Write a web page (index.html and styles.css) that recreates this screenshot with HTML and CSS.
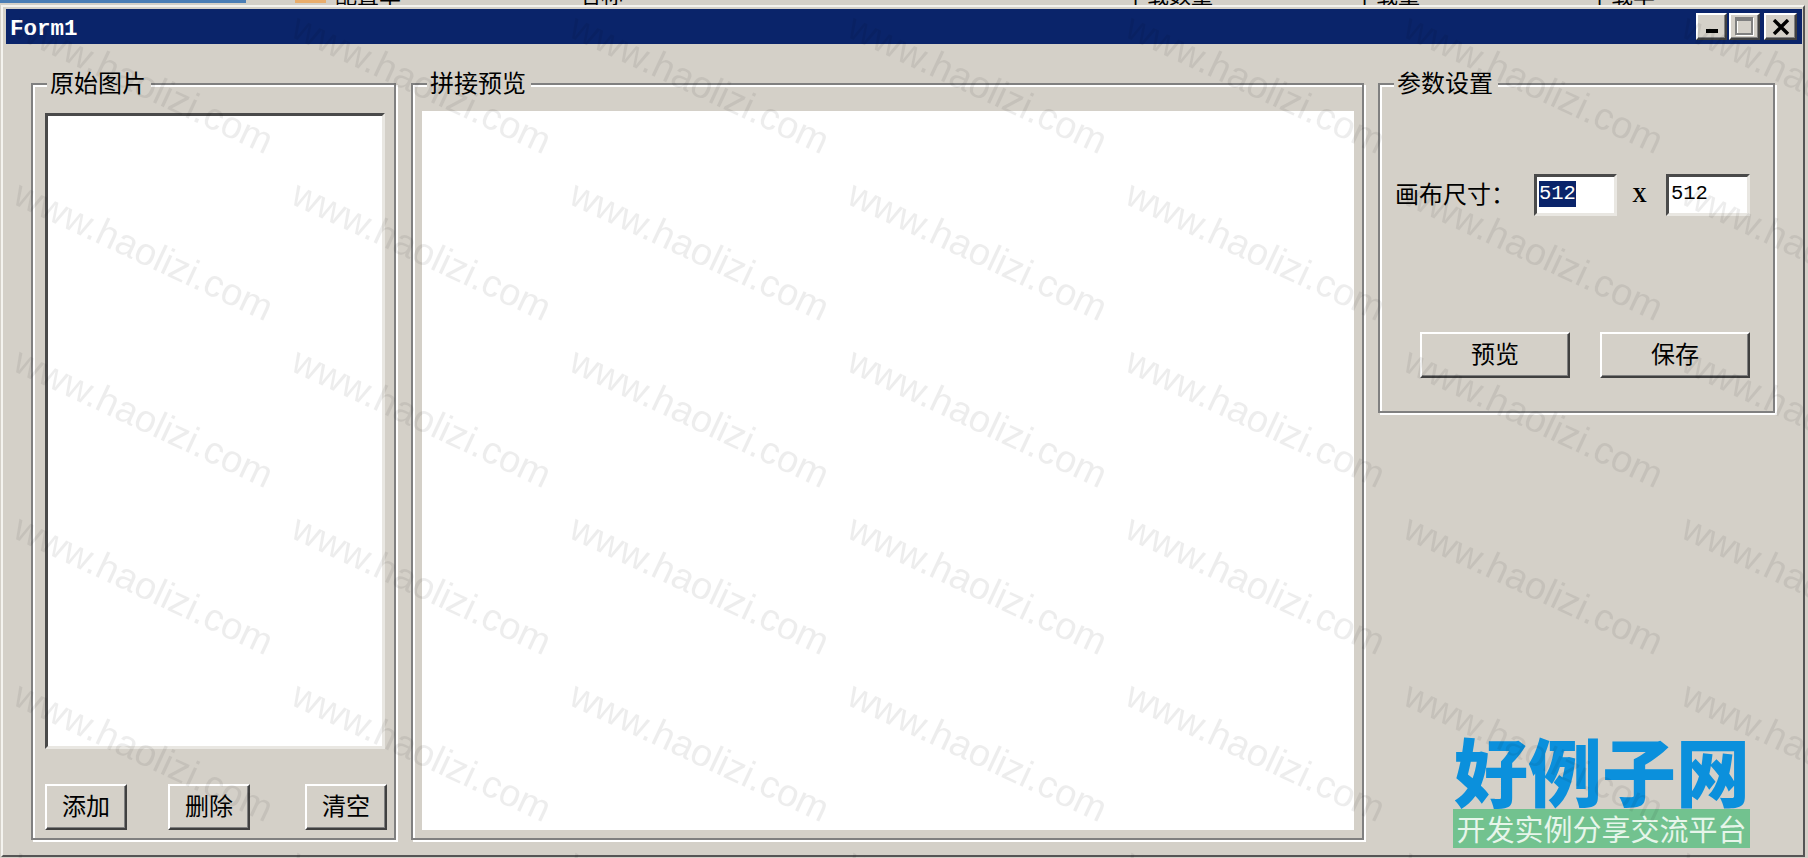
FILE: index.html
```html
<!DOCTYPE html>
<html>
<head>
<meta charset="utf-8">
<title>Form1</title>
<link rel="stylesheet" href="styles.css">
</head>

<body>
  <div class="behind">
    <div class="behind_tab"></div>
    <div class="behind_icon"></div>
    <span class="behind_a">配置单</span>
    <span class="behind_b">名称</span>
    <span class="behind_c">下载数量</span>
    <span class="behind_d">下载量</span>
    <span class="behind_e">下载率</span>
  </div>

  <div class="window">
    <div class="title_bar">
      <span class="title_text">Form1</span>
      <div class="caption_btns">
        <div class="caption_btn">
          <svg width="12" height="5" viewBox="0 0 12 5"><rect width="12" height="4" fill="#000"/></svg>
        </div>
        <div class="caption_btn caption_max">
          <svg width="19" height="19" viewBox="0 0 19 19">
            <rect x="2" y="2" width="16" height="16" fill="none" stroke="#fff" stroke-width="2"/>
            <rect x="1" y="1" width="16" height="16" fill="none" stroke="#808080" stroke-width="2"/>
            <rect x="1" y="1" width="16" height="3" fill="#808080"/>
          </svg>
        </div>
        <div class="caption_btn caption_close">
          <svg width="18" height="16" viewBox="0 0 18 16"><path d="M2 1 L16 15 M16 1 L2 15" stroke="#000" stroke-width="3.4" fill="none"/></svg>
        </div>
      </div>
    </div>

    <div class="content">
      <div class="group group_source">
        <span class="legend">原始图片</span>
        <div class="list_box"></div>
        <div class="source_btns">
          <div class="btn btn_small">添加</div>
          <div class="btn btn_small btn_delete">删除</div>
          <div class="btn btn_small btn_clear">清空</div>
        </div>
      </div>

      <div class="group group_preview">
        <span class="legend">拼接预览</span>
        <div class="preview_box"></div>
      </div>

      <div class="group group_params">
        <span class="legend">参数设置</span>
        <div class="size_row">
          <span class="size_label">画布尺寸：</span>
          <div class="text_input"><span class="selected">512</span></div>
          <span class="size_x">X</span>
          <div class="text_input text_input_b">512</div>
        </div>
        <div class="param_btns">
          <div class="btn btn_wide">预览</div>
          <div class="btn btn_wide">保存</div>
        </div>
      </div>
    </div>
  </div>

  <div class="stamp">
    <div class="stamp_name">好例子网</div>
    <div class="stamp_slogan">开发实例分享交流平台</div>
  </div>

  <svg class="watermark" width="1808" height="858">
    <defs>
      <pattern id="mark" width="278" height="167" patternUnits="userSpaceOnUse">
        <text x="11" y="36" transform="rotate(25 11 36)" class="mark_text">www.haolizi.com</text>
      </pattern>
    </defs>
    <rect width="1808" height="858" fill="url(#mark)"/>
  </svg>
</body>
</html>
```

FILE: styles.css
```css
* {
  box-sizing: border-box;
}

html, body {
  margin: 0;
  padding: 0;
  height: 858px;
  overflow: hidden;
  background-color: #d4d0c8;
  color: #000;
  font-family: "Noto Sans CJK SC", sans-serif;
}

body {
  position: relative;
  display: flex;
  flex-direction: column;
}

/* the other program peeking out above the window */
.behind {
  height: 5px;
  flex: none;
  display: flex;
  overflow: hidden;
  font-size: 22px;
  line-height: 24px;
  white-space: nowrap;
}
.behind span {
  margin-top: -19px;
}
.behind_tab {
  width: 246px;
  height: 3px;
  background-color: #4a7db5;
}
.behind_icon {
  width: 31px;
  height: 3px;
  margin-left: 49px;
  background-color: #e9ad6c;
}
.behind_a {
  margin-left: 9px;
}
.behind_b {
  margin-left: 178px;
}
.behind_c {
  margin-left: 502px;
}
.behind_d {
  margin-left: 141px;
}
.behind_e {
  margin-left: 169px;
}

.window {
  flex: 1;
  margin: 0 3px 1px 1px;
  padding: 2px 1px 0 3px;
  display: flex;
  flex-direction: column;
  background-color: #d4d0c8;
  border-top: 2px solid #f4f3ef;
  border-left: 2px solid #f4f3ef;
  border-right: 2px solid #555;
  border-bottom: 2px solid #555;
}

.title_bar {
  height: 35px;
  flex: none;
  display: flex;
  align-items: center;
  justify-content: space-between;
  padding: 0 5px 0 4px;
  background-color: #0a246a;
}
.title_text {
  padding-top: 5px;
  font-family: "Liberation Mono", monospace;
  font-weight: bold;
  font-size: 22.5px;
  line-height: 26px;
  color: #fff;
}

.caption_btns {
  display: flex;
}
.caption_btn {
  width: 31px;
  height: 27px;
  display: flex;
  align-items: flex-end;
  justify-content: center;
  padding-bottom: 4px;
  background-color: #d4d0c8;
  border: 2px solid;
  border-color: #fff #404040 #404040 #fff;
  box-shadow: inset -1px -1px 0 #808080;
}
.caption_max {
  margin-left: 2px;
  align-items: center;
  padding-bottom: 0;
}
.caption_close {
  width: 33px;
  margin-left: 4px;
  align-items: center;
  padding-bottom: 0;
}

.content {
  flex: 1;
  display: flex;
  padding: 39px 0 15px 25px;
}

/* etched frame: grey line, white line */
.group {
  position: relative;
  display: flex;
  flex-direction: column;
  border: 2px solid #808080;
  box-shadow: 2px 2px 0 #fff, inset 2px 2px 0 #fff;
}
.legend {
  position: absolute;
  top: -17px;
  padding: 0 5px 0 3px;
  background: linear-gradient(transparent 3px, #d4d0c8 3px);
  font-size: 24px;
  line-height: 28px;
}

.group_source {
  width: 365px;
  padding: 28px 9px 8px 12px;
}
.group_source .legend {
  left: 14px;
}
.group_preview {
  width: 953px;
  margin-left: 15px;
  padding: 26px 8px 8px 9px;
}
.group_preview .legend {
  left: 14px;
}
.group_params {
  width: 397px;
  height: 330px;
  margin-left: 14px;
  padding: 89px 0 0 15px;
}
.group_params .legend {
  left: 14px;
}

.list_box {
  flex: 1;
  background-color: #fff;
  border: 3px solid;
  border-color: #4a4a4a #e9e7e2 #e9e7e2 #4a4a4a;
}
.preview_box {
  flex: 1;
  background-color: #fff;
}

.source_btns {
  display: flex;
  margin: 35px -2px 0 0;
}
.btn {
  display: flex;
  align-items: center;
  justify-content: center;
  padding-bottom: 4px;
  background-color: #d4d0c8;
  border: 2px solid;
  border-color: #fff #404040 #404040 #fff;
  box-shadow: inset -1px -1px 0 #808080;
  font-size: 24px;
  line-height: 28px;
}
.btn_small {
  width: 82px;
  height: 46px;
}
.btn_delete {
  margin-left: 41px;
}
.btn_clear {
  margin-left: auto;
}
.btn_wide {
  width: 150px;
  height: 46px;
}

.size_row {
  display: flex;
  align-items: center;
  height: 42px;
}
.size_label {
  width: 139px;
  padding-bottom: 6px;
  font-size: 24px;
  white-space: nowrap;
}
.text_input {
  width: 83px;
  height: 42px;
  padding-left: 2px;
  background-color: #fff;
  border: 3px solid;
  border-color: #4a4a4a #e9e7e2 #e9e7e2 #4a4a4a;
  font-family: "Liberation Mono", monospace;
  font-size: 20.5px;
  line-height: 33px;
}
.text_input_b {
  width: 84px;
}
.selected {
  display: inline-block;
  height: 26px;
  line-height: 25px;
  background-color: #0a246a;
  color: #fff;
}
.size_x {
  width: 49px;
  padding-right: 4px;
  text-align: center;
  font-family: "Liberation Serif", serif;
  font-weight: bold;
  font-size: 20px;
}

.param_btns {
  display: flex;
  gap: 30px;
  margin: 116px 0 0 25px;
}

/* site stamp and watermark, both laid over the window */
.stamp {
  position: absolute;
  left: 1454px;
  top: 733px;
  width: 296px;
}
.stamp_name {
  height: 76px;
  font-size: 74px;
  line-height: 72px;
  font-weight: 900;
  color: #0b90dc;
  white-space: nowrap;
}
.stamp_slogan {
  height: 39px;
  margin-left: -1px;
  text-align: center;
  background-color: #72c28f;
  color: #e6f5ea;
  font-size: 29px;
  line-height: 38px;
  white-space: nowrap;
}

.watermark {
  position: absolute;
  left: 0;
  top: 0;
  pointer-events: none;
}
.mark_text {
  font-family: "Liberation Sans", sans-serif;
  font-size: 38px;
  fill: rgba(0, 0, 0, 0.07);
}
```
